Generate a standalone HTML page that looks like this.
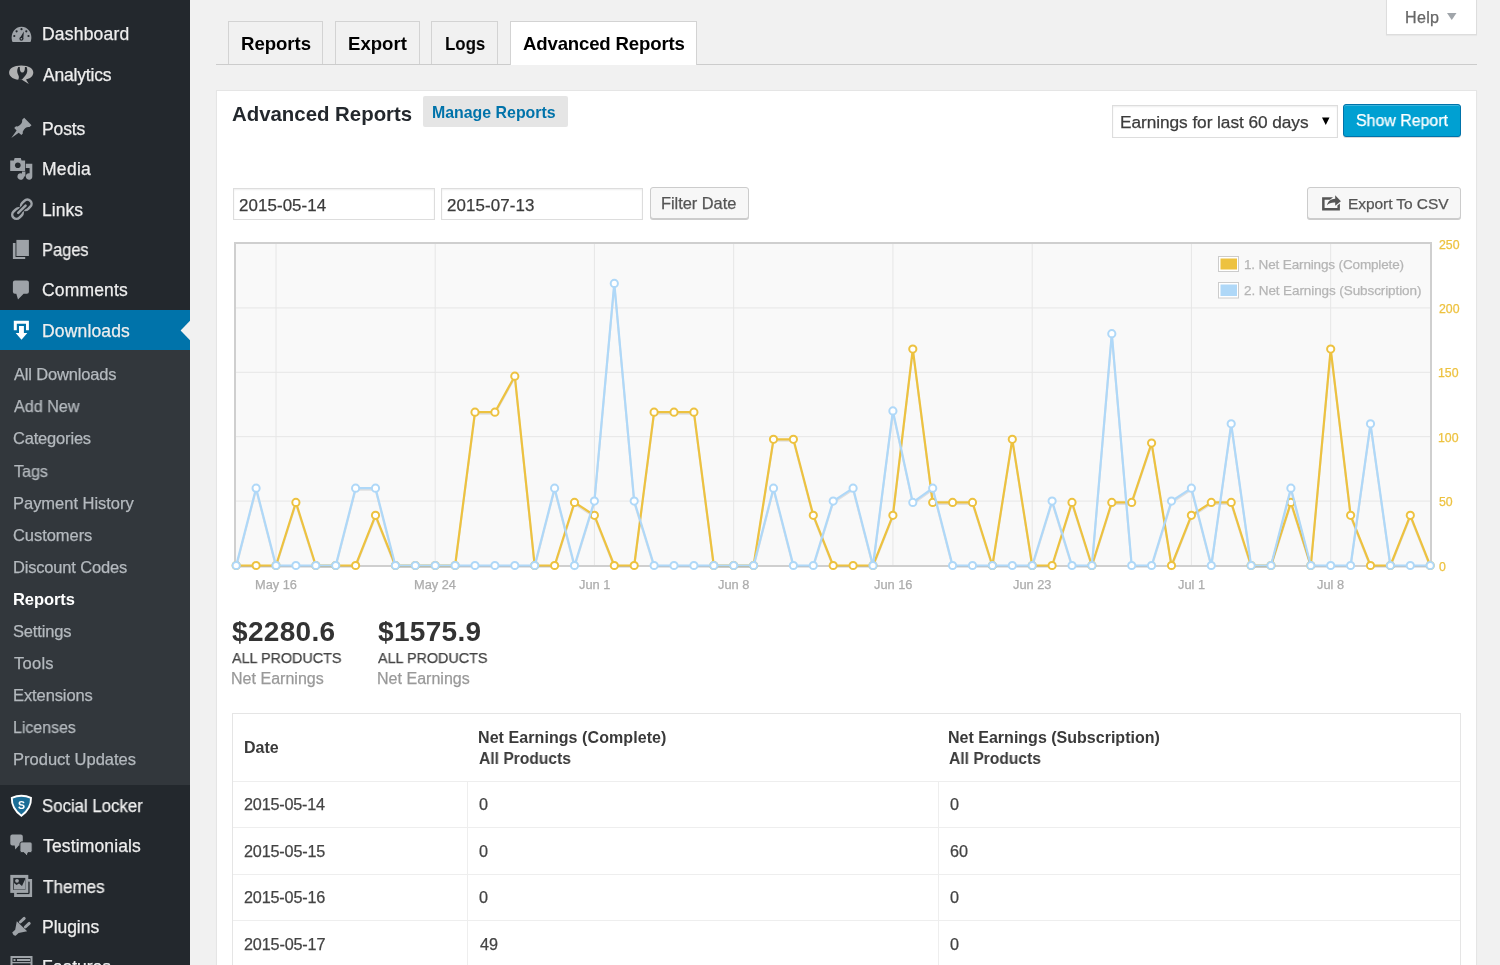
<!DOCTYPE html><html><head><meta charset="utf-8"><style>
*{margin:0;padding:0;box-sizing:border-box}
html,body{width:1500px;height:965px;overflow:hidden;background:#f1f1f1;font-family:"Liberation Sans",sans-serif}
.t{position:absolute;white-space:nowrap;will-change:transform;-webkit-text-stroke:0.25px currentColor}
.b{position:absolute}
</style></head><body>

<div class="b" style="left:0;top:0;width:190px;height:965px;background:#23282d"></div>
<div class="b" style="left:0;top:350px;width:190px;height:435px;background:#32373c"></div>
<div class="b" style="left:0;top:310px;width:190px;height:40px;background:#0073aa"></div>
<svg class="b" style="left:180px;top:320px" width="10" height="21"><polygon points="10,0.8 0.6,10.5 10,20.2" fill="#f1f1f1"/></svg>
<div class="t" style="left:41.77px;top:26px;font-size:17.5px;line-height:17.5px;color:#eee;letter-spacing:0.206px;">Dashboard</div>
<div class="t" style="left:43.17px;top:67px;font-size:17.5px;line-height:17.5px;color:#eee;letter-spacing:-0.182px;">Analytics</div>
<div class="t" style="left:41.77px;top:121px;font-size:17.5px;line-height:17.5px;color:#eee;letter-spacing:-0.101px;">Posts</div>
<div class="t" style="left:41.77px;top:161px;font-size:17.5px;line-height:17.5px;color:#eee;letter-spacing:0.287px;">Media</div>
<div class="t" style="left:41.77px;top:202px;font-size:17.5px;line-height:17.5px;color:#eee;letter-spacing:0.030px;">Links</div>
<div class="t" style="left:41.85px;top:242px;font-size:17.5px;line-height:17.5px;color:#eee;transform:scaleX(0.9401);transform-origin:0 0;">Pages</div>
<div class="t" style="left:42.33px;top:282px;font-size:17.5px;line-height:17.5px;color:#eee;letter-spacing:0.156px;">Comments</div>
<div class="t" style="left:41.77px;top:323px;font-size:17.5px;line-height:17.5px;color:#eee;letter-spacing:0.162px;">Downloads</div>
<div class="t" style="left:42.44px;top:798px;font-size:17.5px;line-height:17.5px;color:#eee;transform:scaleX(0.9588);transform-origin:0 0;">Social Locker</div>
<div class="t" style="left:42.82px;top:838px;font-size:17.5px;line-height:17.5px;color:#eee;letter-spacing:0.139px;">Testimonials</div>
<div class="t" style="left:42.82px;top:879px;font-size:17.5px;line-height:17.5px;color:#eee;transform:scaleX(0.9744);transform-origin:0 0;">Themes</div>
<div class="t" style="left:41.77px;top:919px;font-size:17.5px;line-height:17.5px;color:#eee;letter-spacing:-0.039px;">Plugins</div>
<div class="t" style="left:41.77px;top:959px;font-size:17.5px;line-height:17.5px;color:#eee;">Features</div>
<div class="t" style="left:14.07px;top:366px;font-size:16.5px;line-height:16.5px;color:#b4b9be;letter-spacing:-0.168px;">All Downloads</div>
<div class="t" style="left:14.07px;top:398px;font-size:16.5px;line-height:16.5px;color:#b4b9be;transform:scaleX(0.9782);transform-origin:0 0;">Add New</div>
<div class="t" style="left:13.28px;top:430px;font-size:16.5px;line-height:16.5px;color:#b4b9be;letter-spacing:-0.186px;">Categories</div>
<div class="t" style="left:13.75px;top:463px;font-size:16.5px;line-height:16.5px;color:#b4b9be;transform:scaleX(0.9767);transform-origin:0 0;">Tags</div>
<div class="t" style="left:12.75px;top:495px;font-size:16.5px;line-height:16.5px;color:#b4b9be;letter-spacing:-0.024px;">Payment History</div>
<div class="t" style="left:13.28px;top:527px;font-size:16.5px;line-height:16.5px;color:#b4b9be;letter-spacing:-0.057px;">Customers</div>
<div class="t" style="left:12.75px;top:559px;font-size:16.5px;line-height:16.5px;color:#b4b9be;letter-spacing:-0.179px;">Discount Codes</div>
<div class="t" style="left:13.01px;top:591px;font-size:16.5px;line-height:16.5px;font-weight:bold;-webkit-text-stroke:0;color:#fff;letter-spacing:-0.065px;">Reports</div>
<div class="t" style="left:13.36px;top:623px;font-size:16.5px;line-height:16.5px;color:#b4b9be;letter-spacing:-0.154px;">Settings</div>
<div class="t" style="left:13.74px;top:655px;font-size:16.5px;line-height:16.5px;color:#b4b9be;letter-spacing:0.262px;">Tools</div>
<div class="t" style="left:12.75px;top:687px;font-size:16.5px;line-height:16.5px;color:#b4b9be;letter-spacing:-0.097px;">Extensions</div>
<div class="t" style="left:12.79px;top:719px;font-size:16.5px;line-height:16.5px;color:#b4b9be;transform:scaleX(0.9655);transform-origin:0 0;">Licenses</div>
<div class="t" style="left:12.75px;top:751px;font-size:16.5px;line-height:16.5px;color:#b4b9be;letter-spacing:0.010px;">Product Updates</div>
<svg class="b" style="left:0;top:0" width="190" height="965"><path d="M12,40.8 A9.9,11 0 1 1 31,40.8 Q31,42 29.8,42 L13.2,42 Q12,42 12,40.8Z" fill="#9ea3a8"/><circle cx="21.5" cy="29.2" r="1.1" fill="#23282d"/><circle cx="16.6" cy="31.3" r="1.1" fill="#23282d"/><circle cx="26.3" cy="31.3" r="1.1" fill="#23282d"/><circle cx="14.3" cy="36" r="1.1" fill="#23282d"/><circle cx="28.5" cy="36" r="1.1" fill="#23282d"/><polygon points="23.9,31.6 19.7,38.2 23.2,39.2" fill="#23282d"/><circle cx="21.4" cy="38.7" r="2" fill="#23282d"/><circle cx="21.4" cy="38.7" r="0.8" fill="#9ea3a8"/><path d="M21.2,65.6 C29,65.6 33.3,68.5 33.3,72.6 C33.3,76.3 30,78.8 26,79.6 L28.8,84 L22.3,80 C14.3,80.2 9.1,77 9.1,72.8 C9.1,68.5 13.5,65.6 21.2,65.6Z" fill="#b0b1b2"/><path d="M18.3,67 L19.8,67 C19.6,70.5 20.5,72.6 22.3,72.6 C24.1,72.6 25.1,70.5 24.9,67 L26.6,67 C27.8,69.5 27.6,73.5 25.2,75.8 L21.8,79.8 L18.2,80 C19,78 19.2,76.5 18.3,75 C16.8,72.5 16.8,69.5 18.3,67Z" fill="#23282d"/><path transform="translate(11.3,138) rotate(45)" d="M0,0 L-1.5,-9 L-5,-9.2 Q-5.6,-11.8 -3.6,-12.6 Q-2.9,-15 -3,-17 Q-3.2,-19 -5.2,-20.6 L-5.2,-23.4 L5.2,-23.4 L5.2,-20.6 Q3.2,-19 3,-17 Q2.9,-15 3.6,-12.6 Q5.6,-11.8 5,-9.2 L1.5,-9 Z" fill="#9ea3a8"/><path d="M10.2,160.6 L13.9,160.6 L14.6,158 L20.8,158 L21.5,160.6 L25.1,160.6 L25.1,171 L10.2,171Z" fill="#9ea3a8"/><circle cx="17.8" cy="165.3" r="2.8" fill="#23282d"/><path d="M25.8,163.8 L32.3,163.8 L32.3,176.5 A3.2,3.2 0 1 1 29.6,173.3 L29.6,167.9 L25.8,167.9Z" fill="#9ea3a8"/><path d="M22,172.2 L24,172.2 L24,176.5 A3.3,3.3 0 1 1 22,173.5Z" fill="#9ea3a8"/><rect x="22" y="171.5" width="3.4" height="5" fill="#9ea3a8"/><g transform="translate(21.9,209.2) rotate(-45)" fill="none" stroke-width="2.5"><rect x="-11.9" y="-4.2" width="11.4" height="8.4" rx="4.2" stroke="#9ea3a8"/><rect x="0.5" y="-4.2" width="11.4" height="8.4" rx="4.2" stroke="#9ea3a8"/><line x1="-5.2" y1="0" x2="5.2" y2="0" stroke="#23282d" stroke-width="5" stroke-linecap="round"/><line x1="-5.2" y1="0" x2="5.2" y2="0" stroke="#9ea3a8" stroke-width="2.5" stroke-linecap="round"/></g><path d="M12.9,243.1 L15.5,243.1 L15.5,257 L25.2,257 L25.2,259 L12.9,259Z" fill="#9ea3a8"/><rect x="16.4" y="239.9" width="12.5" height="16.1" fill="#9ea3a8"/><path d="M14.9,280.6 L26.9,280.6 Q28.9,280.6 28.9,282.6 L28.9,291.8 Q28.9,293.8 26.9,293.8 L23.6,293.8 L18,299.5 L16.3,293.8 L14.9,293.8 Q12.9,293.8 12.9,291.8 L12.9,282.6 Q12.9,280.6 14.9,280.6Z" fill="#9ea3a8"/><path d="M13.8,320.8 L28.9,320.8 L28.9,330.2 L26,330.2 L26,323.7 L16.8,323.7 L16.8,330.2 L13.8,330.2Z" fill="#fff"/><path d="M19,325.9 L23.9,325.9 L23.9,333 L27.3,333 L21.5,339.8 L15.7,333 L19,333Z" fill="#fff"/><path d="M11.8,797.8 Q21.4,793.6 31,797.8 Q31.4,808.5 21.4,815.8 Q11.4,808.5 11.8,797.8Z" fill="#1b6d96" stroke="#fff" stroke-width="1.9"/><text x="21.5" y="809" font-family="Liberation Sans" font-weight="bold" font-size="10.5" fill="#fff" text-anchor="middle">S</text><path d="M12.3,834.6 L20.8,834.6 Q22.8,834.6 22.8,836.6 L22.8,843.6 Q22.8,845.6 20.8,845.6 L18.8,845.6 L15.3,849.4 L14.7,845.6 L12.3,845.6 Q10.3,845.6 10.3,843.6 L10.3,836.6 Q10.3,834.6 12.3,834.6Z" fill="#9ea3a8"/><path d="M21.9,841.9 L30.2,841.9 Q32.2,841.9 32.2,843.9 L32.2,850.7 Q32.2,852.7 30.2,852.7 L28,852.7 L27.2,856.3 L24,852.7 L21.9,852.7 Q19.9,852.7 19.9,850.7 L19.9,843.9 Q19.9,841.9 21.9,841.9Z" fill="#9ea3a8" stroke="#23282d" stroke-width="1"/><path d="M14.1,879 L14.1,896.9 L32.1,896.9 L32.1,879 Z M16.8,893.9 L16.8,892.9 L29.4,892.9 L29.4,881.7 L29.4,881.7Z" fill="#9ea3a8" fill-rule="evenodd"/><rect x="16.9" y="881.6" width="12.5" height="12.5" fill="#23282d"/><rect x="11.8" y="876.4" width="15" height="15" fill="#23282d" stroke="#9ea3a8" stroke-width="3"/><circle cx="17" cy="880.8" r="1.9" fill="#9ea3a8"/><path d="M14,883 L16.5,885 L19,883.5 L22,886 L25,879.5 L25,889.5 L14,889.5Z" fill="#9ea3a8"/><path d="M12.2,932.5 L15.2,929.8 L16.8,921.3 L27.2,931.3 L18.6,933 L15.6,935.8 Q13.6,936.3 12.2,932.5Z" fill="#9ea3a8"/><line x1="20.3" y1="922" x2="24.2" y2="918.4" stroke="#9ea3a8" stroke-width="3" stroke-linecap="round"/><line x1="25.3" y1="927" x2="29.2" y2="923.4" stroke="#9ea3a8" stroke-width="3" stroke-linecap="round"/><rect x="11.5" y="957" width="20" height="12" fill="none" stroke="#9ea3a8" stroke-width="2"/><rect x="13.5" y="959" width="2" height="2" fill="#9ea3a8"/><rect x="17" y="959" width="13" height="2" fill="#9ea3a8"/><rect x="12" y="962" width="19" height="1.3" fill="#9ea3a8"/></svg>
<div class="b" style="left:216px;top:64px;width:1261px;height:1px;background:#ccc"></div>
<div class="b" style="left:228px;top:21px;width:95px;height:43px;background:#f1f1f1;border:1px solid #d3d3d3;border-bottom:none"></div>
<div class="t" style="left:240.97px;top:35px;font-size:18.6px;line-height:18.6px;font-weight:bold;-webkit-text-stroke:0;color:#000;letter-spacing:-0.033px;">Reports</div>
<div class="b" style="left:335px;top:21px;width:85px;height:43px;background:#f1f1f1;border:1px solid #d3d3d3;border-bottom:none"></div>
<div class="t" style="left:348.27px;top:35px;font-size:18.6px;line-height:18.6px;font-weight:bold;-webkit-text-stroke:0;color:#000;letter-spacing:-0.011px;">Export</div>
<div class="b" style="left:431px;top:21px;width:67px;height:43px;background:#f1f1f1;border:1px solid #d3d3d3;border-bottom:none"></div>
<div class="t" style="left:444.79px;top:35px;font-size:18.6px;line-height:18.6px;font-weight:bold;-webkit-text-stroke:0;color:#000;transform:scaleX(0.9067);transform-origin:0 0;">Logs</div>
<div class="b" style="left:510px;top:21px;width:187px;height:44px;background:#fff;border:1px solid #d3d3d3;border-bottom:none"></div>
<div class="t" style="left:522.65px;top:35px;font-size:18.6px;line-height:18.6px;font-weight:bold;-webkit-text-stroke:0;color:#000;letter-spacing:-0.163px;">Advanced Reports</div>
<div class="b" style="left:1386px;top:-1px;width:91px;height:36px;background:#fff;border:1px solid #ddd;border-top:none;box-shadow:0 1px 1px rgba(0,0,0,.04)"></div>
<div class="t" style="left:1404.58px;top:9px;font-size:16.1px;line-height:16.1px;color:#666;letter-spacing:0.321px;">Help</div>
<svg class="b" style="left:1447px;top:13px" width="10" height="8"><polygon points="0,0 9.5,0 4.75,7" fill="#a0a5aa"/></svg>
<div class="b" style="left:216px;top:90px;width:1261px;height:900px;background:#fff;border:1px solid #e5e5e5;box-shadow:0 1px 1px rgba(0,0,0,.04)"></div>
<div class="t" style="left:231.81px;top:104px;font-size:20.4px;line-height:20.4px;font-weight:bold;-webkit-text-stroke:0;color:#23282d;">Advanced Reports</div>
<div class="b" style="left:423px;top:96px;width:145px;height:31px;background:#e5e5e5;border-radius:2px"></div>
<div class="t" style="left:432.35px;top:105px;font-size:15.9px;line-height:15.9px;font-weight:bold;-webkit-text-stroke:0;color:#0073aa;">Manage Reports</div>
<div class="b" style="left:1112px;top:105px;width:226px;height:33px;background:#fff;border:1px solid #ddd;box-shadow:inset 0 1px 2px rgba(0,0,0,.07)"></div>
<div class="t" style="left:1120.28px;top:114px;font-size:17.3px;line-height:17.3px;color:#3c3c3c;letter-spacing:-0.069px;">Earnings for last 60 days</div>
<svg class="b" style="left:1322px;top:117px" width="8" height="9"><polygon points="0,0.5 7.5,0.5 3.75,8" fill="#000"/></svg>
<div class="b" style="left:1343px;top:103.5px;width:118px;height:33px;background:#00a0d2;border:1px solid #0073aa;border-radius:3px;box-shadow:inset 0 1px 0 rgba(120,200,230,.5),0 1px 0 rgba(0,0,0,.15)"></div>
<div class="t" style="left:1355.78px;top:112px;font-size:16.3px;line-height:16.3px;color:#fff;transform:scaleX(0.9777);transform-origin:0 0;">Show Report</div>
<div class="b" style="left:233px;top:188px;width:202px;height:32px;background:#fff;border:1px solid #ddd;box-shadow:inset 0 1px 2px rgba(0,0,0,.07)"></div>
<div class="t" style="left:239.46px;top:198px;font-size:16.9px;line-height:16.9px;color:#3c3c3c;letter-spacing:0.088px;">2015-05-14</div>
<div class="b" style="left:441px;top:188px;width:202px;height:32px;background:#fff;border:1px solid #ddd;box-shadow:inset 0 1px 2px rgba(0,0,0,.07)"></div>
<div class="t" style="left:447.45px;top:198px;font-size:16.9px;line-height:16.9px;color:#3c3c3c;letter-spacing:0.114px;">2015-07-13</div>
<div class="b" style="left:649.5px;top:187px;width:99px;height:32px;background:#f7f7f7;border:1px solid #ccc;border-radius:3px;box-shadow:0 1px 0 #ccc"></div>
<div class="t" style="left:660.76px;top:195px;font-size:16.4px;line-height:16.4px;color:#555;letter-spacing:-0.027px;">Filter Date</div>
<div class="b" style="left:1307px;top:187px;width:154px;height:32px;background:#f7f7f7;border:1px solid #ccc;border-radius:3px;box-shadow:0 1px 0 #ccc"></div>
<svg class="b" style="left:1318px;top:190px" width="26" height="24"><path d="M4.1,7.2 L15,7.2 L12,9.7 L6.6,9.7 L6.6,18.1 L19.4,18.1 L19.4,15.6 L21.9,13.5 L21.9,20.6 L4.1,20.6 Z" fill="#555"/><path d="M9,15.2 C10,11 13,9 17.2,8.8 L17.2,5.3 L22.9,11.2 L17.2,15.7 L17.2,12.5 C13.5,12.3 11,13.2 9,15.2 Z" fill="#555"/></svg>
<div class="t" style="left:1347.53px;top:196px;font-size:15.5px;line-height:15.5px;color:#555;letter-spacing:-0.070px;">Export To CSV</div>
<svg class="b" style="left:0;top:0" width="1500" height="965"><rect x="235" y="243" width="1196" height="323" fill="#f9f9f9"/><line x1="235" x2="1431" y1="501.1" y2="501.1" stroke="#e6e6e6" stroke-width="1"/><line x1="235" x2="1431" y1="436.7" y2="436.7" stroke="#e6e6e6" stroke-width="1"/><line x1="235" x2="1431" y1="372.3" y2="372.3" stroke="#e6e6e6" stroke-width="1"/><line x1="235" x2="1431" y1="307.9" y2="307.9" stroke="#e6e6e6" stroke-width="1"/><line x1="276.0" x2="276.0" y1="243" y2="566" stroke="#e6e6e6" stroke-width="1"/><line x1="435.2" x2="435.2" y1="243" y2="566" stroke="#e6e6e6" stroke-width="1"/><line x1="594.4" x2="594.4" y1="243" y2="566" stroke="#e6e6e6" stroke-width="1"/><line x1="733.7" x2="733.7" y1="243" y2="566" stroke="#e6e6e6" stroke-width="1"/><line x1="892.9" x2="892.9" y1="243" y2="566" stroke="#e6e6e6" stroke-width="1"/><line x1="1032.2" x2="1032.2" y1="243" y2="566" stroke="#e6e6e6" stroke-width="1"/><line x1="1191.4" x2="1191.4" y1="243" y2="566" stroke="#e6e6e6" stroke-width="1"/><line x1="1330.7" x2="1330.7" y1="243" y2="566" stroke="#e6e6e6" stroke-width="1"/><rect x="235" y="243" width="1196" height="323" fill="none" stroke="#cfcfcf" stroke-width="2"/><polyline points="236.2,567.0 256.1,567.0 276.0,567.0 295.9,503.9 315.8,567.0 335.7,567.0 355.6,567.0 375.5,516.8 395.4,567.0 415.3,567.0 435.2,567.0 455.1,567.0 475.0,413.7 494.9,413.7 514.8,377.7 534.7,567.0 554.6,567.0 574.5,503.9 594.4,516.8 614.3,567.0 634.2,567.0 654.1,413.7 674.0,413.7 693.9,413.7 713.8,567.0 733.7,567.0 753.6,567.0 773.5,440.8 793.4,440.8 813.3,516.8 833.2,567.0 853.1,567.0 873.0,567.0 892.9,516.8 912.8,350.6 932.7,503.9 952.6,503.9 972.5,503.9 992.4,567.0 1012.3,440.8 1032.2,567.0 1052.1,567.0 1072.0,503.9 1091.9,567.0 1111.8,503.9 1131.7,503.9 1151.6,444.6 1171.5,567.0 1191.4,516.8 1211.3,503.9 1231.2,503.9 1251.1,567.0 1271.0,567.0 1290.9,503.9 1310.8,567.0 1330.7,350.6 1350.6,516.8 1370.5,567.0 1390.4,567.0 1410.3,516.8 1430.2,567.0" fill="none" stroke="rgba(0,0,0,0.1)" stroke-width="2"/><polyline points="236.2,565.5 256.1,565.5 276.0,565.5 295.9,502.4 315.8,565.5 335.7,565.5 355.6,565.5 375.5,515.3 395.4,565.5 415.3,565.5 435.2,565.5 455.1,565.5 475.0,412.2 494.9,412.2 514.8,376.2 534.7,565.5 554.6,565.5 574.5,502.4 594.4,515.3 614.3,565.5 634.2,565.5 654.1,412.2 674.0,412.2 693.9,412.2 713.8,565.5 733.7,565.5 753.6,565.5 773.5,439.3 793.4,439.3 813.3,515.3 833.2,565.5 853.1,565.5 873.0,565.5 892.9,515.3 912.8,349.1 932.7,502.4 952.6,502.4 972.5,502.4 992.4,565.5 1012.3,439.3 1032.2,565.5 1052.1,565.5 1072.0,502.4 1091.9,565.5 1111.8,502.4 1131.7,502.4 1151.6,443.1 1171.5,565.5 1191.4,515.3 1211.3,502.4 1231.2,502.4 1251.1,565.5 1271.0,565.5 1290.9,502.4 1310.8,565.5 1330.7,349.1 1350.6,515.3 1370.5,565.5 1390.4,565.5 1410.3,515.3 1430.2,565.5" fill="none" stroke="#edc240" stroke-width="2.2" stroke-linejoin="round"/><circle cx="236.2" cy="565.5" r="3.6" fill="#fff" stroke="#edc240" stroke-width="2"/><circle cx="256.1" cy="565.5" r="3.6" fill="#fff" stroke="#edc240" stroke-width="2"/><circle cx="276.0" cy="565.5" r="3.6" fill="#fff" stroke="#edc240" stroke-width="2"/><circle cx="295.9" cy="502.4" r="3.6" fill="#fff" stroke="#edc240" stroke-width="2"/><circle cx="315.8" cy="565.5" r="3.6" fill="#fff" stroke="#edc240" stroke-width="2"/><circle cx="335.7" cy="565.5" r="3.6" fill="#fff" stroke="#edc240" stroke-width="2"/><circle cx="355.6" cy="565.5" r="3.6" fill="#fff" stroke="#edc240" stroke-width="2"/><circle cx="375.5" cy="515.3" r="3.6" fill="#fff" stroke="#edc240" stroke-width="2"/><circle cx="395.4" cy="565.5" r="3.6" fill="#fff" stroke="#edc240" stroke-width="2"/><circle cx="415.3" cy="565.5" r="3.6" fill="#fff" stroke="#edc240" stroke-width="2"/><circle cx="435.2" cy="565.5" r="3.6" fill="#fff" stroke="#edc240" stroke-width="2"/><circle cx="455.1" cy="565.5" r="3.6" fill="#fff" stroke="#edc240" stroke-width="2"/><circle cx="475.0" cy="412.2" r="3.6" fill="#fff" stroke="#edc240" stroke-width="2"/><circle cx="494.9" cy="412.2" r="3.6" fill="#fff" stroke="#edc240" stroke-width="2"/><circle cx="514.8" cy="376.2" r="3.6" fill="#fff" stroke="#edc240" stroke-width="2"/><circle cx="534.7" cy="565.5" r="3.6" fill="#fff" stroke="#edc240" stroke-width="2"/><circle cx="554.6" cy="565.5" r="3.6" fill="#fff" stroke="#edc240" stroke-width="2"/><circle cx="574.5" cy="502.4" r="3.6" fill="#fff" stroke="#edc240" stroke-width="2"/><circle cx="594.4" cy="515.3" r="3.6" fill="#fff" stroke="#edc240" stroke-width="2"/><circle cx="614.3" cy="565.5" r="3.6" fill="#fff" stroke="#edc240" stroke-width="2"/><circle cx="634.2" cy="565.5" r="3.6" fill="#fff" stroke="#edc240" stroke-width="2"/><circle cx="654.1" cy="412.2" r="3.6" fill="#fff" stroke="#edc240" stroke-width="2"/><circle cx="674.0" cy="412.2" r="3.6" fill="#fff" stroke="#edc240" stroke-width="2"/><circle cx="693.9" cy="412.2" r="3.6" fill="#fff" stroke="#edc240" stroke-width="2"/><circle cx="713.8" cy="565.5" r="3.6" fill="#fff" stroke="#edc240" stroke-width="2"/><circle cx="733.7" cy="565.5" r="3.6" fill="#fff" stroke="#edc240" stroke-width="2"/><circle cx="753.6" cy="565.5" r="3.6" fill="#fff" stroke="#edc240" stroke-width="2"/><circle cx="773.5" cy="439.3" r="3.6" fill="#fff" stroke="#edc240" stroke-width="2"/><circle cx="793.4" cy="439.3" r="3.6" fill="#fff" stroke="#edc240" stroke-width="2"/><circle cx="813.3" cy="515.3" r="3.6" fill="#fff" stroke="#edc240" stroke-width="2"/><circle cx="833.2" cy="565.5" r="3.6" fill="#fff" stroke="#edc240" stroke-width="2"/><circle cx="853.1" cy="565.5" r="3.6" fill="#fff" stroke="#edc240" stroke-width="2"/><circle cx="873.0" cy="565.5" r="3.6" fill="#fff" stroke="#edc240" stroke-width="2"/><circle cx="892.9" cy="515.3" r="3.6" fill="#fff" stroke="#edc240" stroke-width="2"/><circle cx="912.8" cy="349.1" r="3.6" fill="#fff" stroke="#edc240" stroke-width="2"/><circle cx="932.7" cy="502.4" r="3.6" fill="#fff" stroke="#edc240" stroke-width="2"/><circle cx="952.6" cy="502.4" r="3.6" fill="#fff" stroke="#edc240" stroke-width="2"/><circle cx="972.5" cy="502.4" r="3.6" fill="#fff" stroke="#edc240" stroke-width="2"/><circle cx="992.4" cy="565.5" r="3.6" fill="#fff" stroke="#edc240" stroke-width="2"/><circle cx="1012.3" cy="439.3" r="3.6" fill="#fff" stroke="#edc240" stroke-width="2"/><circle cx="1032.2" cy="565.5" r="3.6" fill="#fff" stroke="#edc240" stroke-width="2"/><circle cx="1052.1" cy="565.5" r="3.6" fill="#fff" stroke="#edc240" stroke-width="2"/><circle cx="1072.0" cy="502.4" r="3.6" fill="#fff" stroke="#edc240" stroke-width="2"/><circle cx="1091.9" cy="565.5" r="3.6" fill="#fff" stroke="#edc240" stroke-width="2"/><circle cx="1111.8" cy="502.4" r="3.6" fill="#fff" stroke="#edc240" stroke-width="2"/><circle cx="1131.7" cy="502.4" r="3.6" fill="#fff" stroke="#edc240" stroke-width="2"/><circle cx="1151.6" cy="443.1" r="3.6" fill="#fff" stroke="#edc240" stroke-width="2"/><circle cx="1171.5" cy="565.5" r="3.6" fill="#fff" stroke="#edc240" stroke-width="2"/><circle cx="1191.4" cy="515.3" r="3.6" fill="#fff" stroke="#edc240" stroke-width="2"/><circle cx="1211.3" cy="502.4" r="3.6" fill="#fff" stroke="#edc240" stroke-width="2"/><circle cx="1231.2" cy="502.4" r="3.6" fill="#fff" stroke="#edc240" stroke-width="2"/><circle cx="1251.1" cy="565.5" r="3.6" fill="#fff" stroke="#edc240" stroke-width="2"/><circle cx="1271.0" cy="565.5" r="3.6" fill="#fff" stroke="#edc240" stroke-width="2"/><circle cx="1290.9" cy="502.4" r="3.6" fill="#fff" stroke="#edc240" stroke-width="2"/><circle cx="1310.8" cy="565.5" r="3.6" fill="#fff" stroke="#edc240" stroke-width="2"/><circle cx="1330.7" cy="349.1" r="3.6" fill="#fff" stroke="#edc240" stroke-width="2"/><circle cx="1350.6" cy="515.3" r="3.6" fill="#fff" stroke="#edc240" stroke-width="2"/><circle cx="1370.5" cy="565.5" r="3.6" fill="#fff" stroke="#edc240" stroke-width="2"/><circle cx="1390.4" cy="565.5" r="3.6" fill="#fff" stroke="#edc240" stroke-width="2"/><circle cx="1410.3" cy="515.3" r="3.6" fill="#fff" stroke="#edc240" stroke-width="2"/><circle cx="1430.2" cy="565.5" r="3.6" fill="#fff" stroke="#edc240" stroke-width="2"/><polyline points="236.2,567.0 256.1,489.7 276.0,567.0 295.9,567.0 315.8,567.0 335.7,567.0 355.6,489.7 375.5,489.7 395.4,567.0 415.3,567.0 435.2,567.0 455.1,567.0 475.0,567.0 494.9,567.0 514.8,567.0 534.7,567.0 554.6,489.7 574.5,567.0 594.4,502.6 614.3,284.9 634.2,502.6 654.1,567.0 674.0,567.0 693.9,567.0 713.8,567.0 733.7,567.0 753.6,567.0 773.5,489.7 793.4,567.0 813.3,567.0 833.2,502.6 853.1,489.7 873.0,567.0 892.9,412.4 912.8,503.9 932.7,489.7 952.6,567.0 972.5,567.0 992.4,567.0 1012.3,567.0 1032.2,567.0 1052.1,502.6 1072.0,567.0 1091.9,567.0 1111.8,335.2 1131.7,567.0 1151.6,567.0 1171.5,502.6 1191.4,489.7 1211.3,567.0 1231.2,425.3 1251.1,567.0 1271.0,567.0 1290.9,489.7 1310.8,567.0 1330.7,567.0 1350.6,567.0 1370.5,425.3 1390.4,567.0 1410.3,567.0 1430.2,567.0" fill="none" stroke="rgba(0,0,0,0.1)" stroke-width="2"/><polyline points="236.2,565.5 256.1,488.2 276.0,565.5 295.9,565.5 315.8,565.5 335.7,565.5 355.6,488.2 375.5,488.2 395.4,565.5 415.3,565.5 435.2,565.5 455.1,565.5 475.0,565.5 494.9,565.5 514.8,565.5 534.7,565.5 554.6,488.2 574.5,565.5 594.4,501.1 614.3,283.4 634.2,501.1 654.1,565.5 674.0,565.5 693.9,565.5 713.8,565.5 733.7,565.5 753.6,565.5 773.5,488.2 793.4,565.5 813.3,565.5 833.2,501.1 853.1,488.2 873.0,565.5 892.9,410.9 912.8,502.4 932.7,488.2 952.6,565.5 972.5,565.5 992.4,565.5 1012.3,565.5 1032.2,565.5 1052.1,501.1 1072.0,565.5 1091.9,565.5 1111.8,333.7 1131.7,565.5 1151.6,565.5 1171.5,501.1 1191.4,488.2 1211.3,565.5 1231.2,423.8 1251.1,565.5 1271.0,565.5 1290.9,488.2 1310.8,565.5 1330.7,565.5 1350.6,565.5 1370.5,423.8 1390.4,565.5 1410.3,565.5 1430.2,565.5" fill="none" stroke="#afd8f8" stroke-width="2.2" stroke-linejoin="round"/><circle cx="236.2" cy="565.5" r="3.6" fill="#fff" stroke="#afd8f8" stroke-width="2"/><circle cx="256.1" cy="488.2" r="3.6" fill="#fff" stroke="#afd8f8" stroke-width="2"/><circle cx="276.0" cy="565.5" r="3.6" fill="#fff" stroke="#afd8f8" stroke-width="2"/><circle cx="295.9" cy="565.5" r="3.6" fill="#fff" stroke="#afd8f8" stroke-width="2"/><circle cx="315.8" cy="565.5" r="3.6" fill="#fff" stroke="#afd8f8" stroke-width="2"/><circle cx="335.7" cy="565.5" r="3.6" fill="#fff" stroke="#afd8f8" stroke-width="2"/><circle cx="355.6" cy="488.2" r="3.6" fill="#fff" stroke="#afd8f8" stroke-width="2"/><circle cx="375.5" cy="488.2" r="3.6" fill="#fff" stroke="#afd8f8" stroke-width="2"/><circle cx="395.4" cy="565.5" r="3.6" fill="#fff" stroke="#afd8f8" stroke-width="2"/><circle cx="415.3" cy="565.5" r="3.6" fill="#fff" stroke="#afd8f8" stroke-width="2"/><circle cx="435.2" cy="565.5" r="3.6" fill="#fff" stroke="#afd8f8" stroke-width="2"/><circle cx="455.1" cy="565.5" r="3.6" fill="#fff" stroke="#afd8f8" stroke-width="2"/><circle cx="475.0" cy="565.5" r="3.6" fill="#fff" stroke="#afd8f8" stroke-width="2"/><circle cx="494.9" cy="565.5" r="3.6" fill="#fff" stroke="#afd8f8" stroke-width="2"/><circle cx="514.8" cy="565.5" r="3.6" fill="#fff" stroke="#afd8f8" stroke-width="2"/><circle cx="534.7" cy="565.5" r="3.6" fill="#fff" stroke="#afd8f8" stroke-width="2"/><circle cx="554.6" cy="488.2" r="3.6" fill="#fff" stroke="#afd8f8" stroke-width="2"/><circle cx="574.5" cy="565.5" r="3.6" fill="#fff" stroke="#afd8f8" stroke-width="2"/><circle cx="594.4" cy="501.1" r="3.6" fill="#fff" stroke="#afd8f8" stroke-width="2"/><circle cx="614.3" cy="283.4" r="3.6" fill="#fff" stroke="#afd8f8" stroke-width="2"/><circle cx="634.2" cy="501.1" r="3.6" fill="#fff" stroke="#afd8f8" stroke-width="2"/><circle cx="654.1" cy="565.5" r="3.6" fill="#fff" stroke="#afd8f8" stroke-width="2"/><circle cx="674.0" cy="565.5" r="3.6" fill="#fff" stroke="#afd8f8" stroke-width="2"/><circle cx="693.9" cy="565.5" r="3.6" fill="#fff" stroke="#afd8f8" stroke-width="2"/><circle cx="713.8" cy="565.5" r="3.6" fill="#fff" stroke="#afd8f8" stroke-width="2"/><circle cx="733.7" cy="565.5" r="3.6" fill="#fff" stroke="#afd8f8" stroke-width="2"/><circle cx="753.6" cy="565.5" r="3.6" fill="#fff" stroke="#afd8f8" stroke-width="2"/><circle cx="773.5" cy="488.2" r="3.6" fill="#fff" stroke="#afd8f8" stroke-width="2"/><circle cx="793.4" cy="565.5" r="3.6" fill="#fff" stroke="#afd8f8" stroke-width="2"/><circle cx="813.3" cy="565.5" r="3.6" fill="#fff" stroke="#afd8f8" stroke-width="2"/><circle cx="833.2" cy="501.1" r="3.6" fill="#fff" stroke="#afd8f8" stroke-width="2"/><circle cx="853.1" cy="488.2" r="3.6" fill="#fff" stroke="#afd8f8" stroke-width="2"/><circle cx="873.0" cy="565.5" r="3.6" fill="#fff" stroke="#afd8f8" stroke-width="2"/><circle cx="892.9" cy="410.9" r="3.6" fill="#fff" stroke="#afd8f8" stroke-width="2"/><circle cx="912.8" cy="502.4" r="3.6" fill="#fff" stroke="#afd8f8" stroke-width="2"/><circle cx="932.7" cy="488.2" r="3.6" fill="#fff" stroke="#afd8f8" stroke-width="2"/><circle cx="952.6" cy="565.5" r="3.6" fill="#fff" stroke="#afd8f8" stroke-width="2"/><circle cx="972.5" cy="565.5" r="3.6" fill="#fff" stroke="#afd8f8" stroke-width="2"/><circle cx="992.4" cy="565.5" r="3.6" fill="#fff" stroke="#afd8f8" stroke-width="2"/><circle cx="1012.3" cy="565.5" r="3.6" fill="#fff" stroke="#afd8f8" stroke-width="2"/><circle cx="1032.2" cy="565.5" r="3.6" fill="#fff" stroke="#afd8f8" stroke-width="2"/><circle cx="1052.1" cy="501.1" r="3.6" fill="#fff" stroke="#afd8f8" stroke-width="2"/><circle cx="1072.0" cy="565.5" r="3.6" fill="#fff" stroke="#afd8f8" stroke-width="2"/><circle cx="1091.9" cy="565.5" r="3.6" fill="#fff" stroke="#afd8f8" stroke-width="2"/><circle cx="1111.8" cy="333.7" r="3.6" fill="#fff" stroke="#afd8f8" stroke-width="2"/><circle cx="1131.7" cy="565.5" r="3.6" fill="#fff" stroke="#afd8f8" stroke-width="2"/><circle cx="1151.6" cy="565.5" r="3.6" fill="#fff" stroke="#afd8f8" stroke-width="2"/><circle cx="1171.5" cy="501.1" r="3.6" fill="#fff" stroke="#afd8f8" stroke-width="2"/><circle cx="1191.4" cy="488.2" r="3.6" fill="#fff" stroke="#afd8f8" stroke-width="2"/><circle cx="1211.3" cy="565.5" r="3.6" fill="#fff" stroke="#afd8f8" stroke-width="2"/><circle cx="1231.2" cy="423.8" r="3.6" fill="#fff" stroke="#afd8f8" stroke-width="2"/><circle cx="1251.1" cy="565.5" r="3.6" fill="#fff" stroke="#afd8f8" stroke-width="2"/><circle cx="1271.0" cy="565.5" r="3.6" fill="#fff" stroke="#afd8f8" stroke-width="2"/><circle cx="1290.9" cy="488.2" r="3.6" fill="#fff" stroke="#afd8f8" stroke-width="2"/><circle cx="1310.8" cy="565.5" r="3.6" fill="#fff" stroke="#afd8f8" stroke-width="2"/><circle cx="1330.7" cy="565.5" r="3.6" fill="#fff" stroke="#afd8f8" stroke-width="2"/><circle cx="1350.6" cy="565.5" r="3.6" fill="#fff" stroke="#afd8f8" stroke-width="2"/><circle cx="1370.5" cy="423.8" r="3.6" fill="#fff" stroke="#afd8f8" stroke-width="2"/><circle cx="1390.4" cy="565.5" r="3.6" fill="#fff" stroke="#afd8f8" stroke-width="2"/><circle cx="1410.3" cy="565.5" r="3.6" fill="#fff" stroke="#afd8f8" stroke-width="2"/><circle cx="1430.2" cy="565.5" r="3.6" fill="#fff" stroke="#afd8f8" stroke-width="2"/><rect x="1218.5" y="256.5" width="20" height="15" fill="#fff" stroke="#ccc" stroke-width="1"/><rect x="1220.5" y="258.5" width="16.5" height="11" fill="#edc240"/><rect x="1218.5" y="282.5" width="20" height="15.5" fill="#fff" stroke="#ccc" stroke-width="1"/><rect x="1220.5" y="284.5" width="16.5" height="11.5" fill="#afd8f8"/></svg>
<div class="t" style="left:1243.57px;top:258px;font-size:13.5px;line-height:13.5px;color:#b5b5b5;letter-spacing:-0.140px;">1. Net Earnings (Complete)</div>
<div class="t" style="left:1243.92px;top:284px;font-size:13.5px;line-height:13.5px;color:#b5b5b5;letter-spacing:-0.092px;">2. Net Earnings (Subscription)</div>
<div class="t" style="left:254.76px;top:579px;font-size:12.8px;line-height:12.8px;color:#acacac;">May 16</div>
<div class="t" style="left:413.88px;top:579px;font-size:12.8px;line-height:12.8px;color:#acacac;">May 24</div>
<div class="t" style="left:578.96px;top:579px;font-size:12.8px;line-height:12.8px;color:#acacac;">Jun 1</div>
<div class="t" style="left:718.22px;top:579px;font-size:12.8px;line-height:12.8px;color:#acacac;">Jun 8</div>
<div class="t" style="left:873.87px;top:579px;font-size:12.8px;line-height:12.8px;color:#acacac;">Jun 16</div>
<div class="t" style="left:1013.17px;top:579px;font-size:12.8px;line-height:12.8px;color:#acacac;">Jun 23</div>
<div class="t" style="left:1178.09px;top:579px;font-size:12.8px;line-height:12.8px;color:#acacac;">Jul 1</div>
<div class="t" style="left:1317.36px;top:579px;font-size:12.8px;line-height:12.8px;color:#acacac;">Jul 8</div>
<div class="t" style="left:1438.72px;top:561px;font-size:12.3px;line-height:12.3px;color:#edc240;">0</div>
<div class="t" style="left:1438.71px;top:496px;font-size:12.3px;line-height:12.3px;color:#edc240;">50</div>
<div class="t" style="left:1438.27px;top:432px;font-size:12.3px;line-height:12.3px;color:#edc240;">100</div>
<div class="t" style="left:1438.27px;top:367px;font-size:12.3px;line-height:12.3px;color:#edc240;">150</div>
<div class="t" style="left:1438.59px;top:303px;font-size:12.3px;line-height:12.3px;color:#edc240;">200</div>
<div class="t" style="left:1438.59px;top:239px;font-size:12.3px;line-height:12.3px;color:#edc240;">250</div>
<div class="t" style="left:231.84px;top:618px;font-size:28.0px;line-height:28.0px;font-weight:bold;-webkit-text-stroke:0;color:#333;letter-spacing:0.304px;">$2280.6</div>
<div class="t" style="left:232.17px;top:650px;font-size:15.2px;line-height:15.2px;color:#444;transform:scaleX(0.9447);transform-origin:0 0;">ALL PRODUCTS</div>
<div class="t" style="left:230.89px;top:671px;font-size:16.0px;line-height:16.0px;color:#999;letter-spacing:0.027px;">Net Earnings</div>
<div class="t" style="left:377.64px;top:618px;font-size:28.0px;line-height:28.0px;font-weight:bold;-webkit-text-stroke:0;color:#333;letter-spacing:0.309px;">$1575.9</div>
<div class="t" style="left:377.97px;top:650px;font-size:15.2px;line-height:15.2px;color:#444;transform:scaleX(0.9447);transform-origin:0 0;">ALL PRODUCTS</div>
<div class="t" style="left:376.69px;top:671px;font-size:16.0px;line-height:16.0px;color:#999;letter-spacing:0.027px;">Net Earnings</div>
<div class="b" style="left:232px;top:713px;width:1229px;height:300px;background:#fff;border:1px solid #e5e5e5"></div>
<div class="b" style="left:233px;top:781px;width:1227px;height:1px;background:#eee"></div>
<div class="b" style="left:233px;top:827px;width:1227px;height:1px;background:#eee"></div>
<div class="b" style="left:233px;top:873.5px;width:1227px;height:1px;background:#eee"></div>
<div class="b" style="left:233px;top:920px;width:1227px;height:1px;background:#eee"></div>
<div class="b" style="left:467px;top:782px;width:1px;height:200px;background:#eee"></div>
<div class="b" style="left:938px;top:782px;width:1px;height:200px;background:#eee"></div>
<div class="t" style="left:244.44px;top:740px;font-size:16.0px;line-height:16.0px;font-weight:bold;-webkit-text-stroke:0;color:#3a3a3a;">Date</div>
<div class="t" style="left:478.44px;top:730px;font-size:16.0px;line-height:16.0px;font-weight:bold;-webkit-text-stroke:0;color:#3a3a3a;letter-spacing:0.075px;">Net Earnings (Complete)</div>
<div class="t" style="left:479.13px;top:751px;font-size:16.0px;line-height:16.0px;font-weight:bold;-webkit-text-stroke:0;color:#3a3a3a;transform:scaleX(0.9762);transform-origin:0 0;">All Products</div>
<div class="t" style="left:948.44px;top:730px;font-size:16.0px;line-height:16.0px;font-weight:bold;-webkit-text-stroke:0;color:#3a3a3a;letter-spacing:0.010px;">Net Earnings (Subscription)</div>
<div class="t" style="left:949.13px;top:751px;font-size:16.0px;line-height:16.0px;font-weight:bold;-webkit-text-stroke:0;color:#3a3a3a;transform:scaleX(0.9762);transform-origin:0 0;">All Products</div>
<div class="t" style="left:244.19px;top:796px;font-size:16.2px;line-height:16.2px;color:#444;letter-spacing:-0.187px;">2015-05-14</div>
<div class="t" style="left:479.37px;top:796px;font-size:16.2px;line-height:16.2px;color:#444;">0</div>
<div class="t" style="left:950.17px;top:796px;font-size:16.2px;line-height:16.2px;color:#444;">0</div>
<div class="t" style="left:244.19px;top:843px;font-size:16.2px;line-height:16.2px;color:#444;letter-spacing:-0.165px;">2015-05-15</div>
<div class="t" style="left:479.37px;top:843px;font-size:16.2px;line-height:16.2px;color:#444;">0</div>
<div class="t" style="left:949.99px;top:843px;font-size:16.2px;line-height:16.2px;color:#444;">60</div>
<div class="t" style="left:244.19px;top:889px;font-size:16.2px;line-height:16.2px;color:#444;letter-spacing:-0.162px;">2015-05-16</div>
<div class="t" style="left:479.37px;top:889px;font-size:16.2px;line-height:16.2px;color:#444;">0</div>
<div class="t" style="left:950.17px;top:889px;font-size:16.2px;line-height:16.2px;color:#444;">0</div>
<div class="t" style="left:244.19px;top:936px;font-size:16.2px;line-height:16.2px;color:#444;letter-spacing:-0.149px;">2015-05-17</div>
<div class="t" style="left:479.64px;top:936px;font-size:16.2px;line-height:16.2px;color:#444;">49</div>
<div class="t" style="left:950.17px;top:936px;font-size:16.2px;line-height:16.2px;color:#444;">0</div>
</body></html>
